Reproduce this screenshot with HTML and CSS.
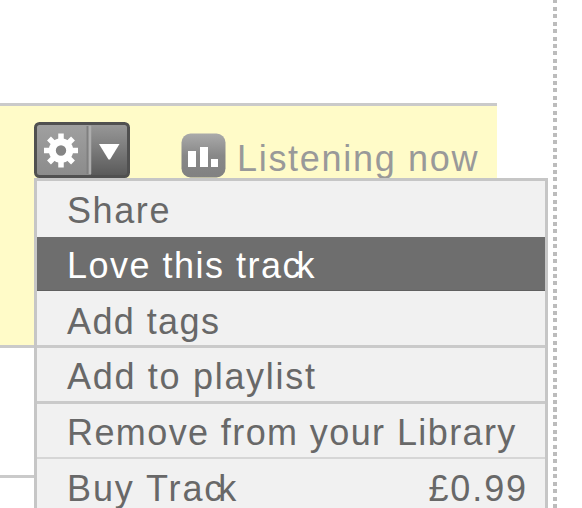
FILE: index.html
```html
<!DOCTYPE html>
<html lang="en">
<head>
<meta charset="utf-8">
<title>Track menu</title>
<link rel="stylesheet" href="styles.css">
</head>
<body>
<main class="page">
  <section class="tracks">
    <div class="track track-current">
      <div class="toolbar">
        <button class="gear-button" aria-label="Track options">
          <svg width="96" height="56" viewBox="0 0 96 56">
            <defs>
              <linearGradient id="gear" x1="0" y1="0" x2="0" y2="1"><stop offset="0" stop-color="#a0a0a0"/><stop offset="1" stop-color="#8b8b8b"/></linearGradient>
              <linearGradient id="drop" x1="0" y1="0" x2="0" y2="1"><stop offset="0" stop-color="#989898"/><stop offset=".45" stop-color="#7d7d7d"/><stop offset="1" stop-color="#595959"/></linearGradient>
            </defs>
            <rect x="1.5" y="1.5" width="93" height="53" rx="4" fill="url(#gear)"/>
            <path d="M57 2h34q3 0 3 3v46q0 3-3 3H57z" fill="url(#drop)"/>
            <path d="M53.500 4v48" stroke="#808080" stroke-width="2"/>
            <path d="M56 4v48" stroke="#adadad" stroke-width="2.500"/>
            <rect x="1.500" y="1.500" width="93" height="53" rx="4" fill="none" stroke="#505050" stroke-width="3"/>
            <g transform="translate(27 28.500)" stroke="#fff">
              <path d="M0-17V17M-17 0H17M-12-12L12 12M-12 12L12-12" stroke-width="5.500"/>
              <circle r="8.700" fill="#858585" stroke-width="7"/>
            </g>
            <path d="M65 22H85.500L76 37.500h-1.500z" fill="#fff"/>
          </svg>
        </button>
        <div class="listening">
          <svg width="45" height="45" viewBox="0 0 45 45">
            <defs><linearGradient id="bars" x1="0" y1="0" x2="0" y2="1"><stop offset="0" stop-color="#aaa"/><stop offset=".5" stop-color="#888"/><stop offset="1" stop-color="#818181"/></linearGradient></defs>
            <rect x=".5" y=".5" width="44" height="44" rx="9" fill="url(#bars)"/>
            <path d="M7 18h8v16H7zM19 14h8v20h-8zM30 26h7v8h-7z" fill="#fff"/>
          </svg>
          <span class="listening-text">Listening now</span>
        </div>
      </div>
    </div>
    <div class="track"></div>
  </section>
  <ul class="menu">
    <li class="item share"><span>Share</span></li>
    <li class="item selected"><span>Love this tra<span class="tight">c</span>k</span></li>
    <li class="item tags"><span>Add tags</span></li>
    <li class="item playlist"><span>Add to playlist</span></li>
    <li class="item library"><span>Remove from your Library</span></li>
    <li class="item buy"><span>Buy Tra<span class="tight">c</span>k</span><span class="price">£0.99</span></li>
  </ul>
  <div class="divider"></div>
</main>
</body>
</html>
```
FILE: styles.css
```css
* { box-sizing: border-box; }
body {
  margin: 0;
  background: #fff;
  font-family: "Liberation Sans", Arial, sans-serif;
  font-size: 36px;
  color: #686868;
}
.page {
  position: relative;
  width: 582px;
  height: 508px;
  padding-top: 103px;
  overflow: hidden;
}
.tracks { width: 497px; }
.track {
  height: 130px;
  border-bottom: 3px solid #cacaca;
}
.track-current {
  height: 245px;
  padding: 17px 0 0 34px;
  background: #fffbc8;
  border-top: 3px solid #cacaca;
}
.toolbar { display: flex; }
.gear-button {
  display: block;
  height: 56px;
  margin-top: -1px;
  padding: 0;
  border: 0;
  background: none;
}
.gear-button svg, .listening svg { display: block; }
.listening {
  display: flex;
  margin: 10px 0 0 51px;
  color: #999;
}
.listening-text {
  margin: 5px 0 0 11px;
  line-height: 41px;
  letter-spacing: 1.7px;
  white-space: nowrap;
}
.menu {
  position: absolute;
  top: 178px;
  left: 34px;
  width: 514px;
  margin: 0;
  padding: 0;
  list-style: none;
  background: #f1f1f1;
  border: 3px solid #c6c6c6;
}
.item {
  display: flex;
  justify-content: space-between;
  height: 56px;
  padding: 0 17px 0 30px;
  border-bottom: 2px solid #cacaca;
  line-height: 58px;
  white-space: nowrap;
}
.share { letter-spacing: 1.6px; line-height: 60px; border-bottom: 0; }
.selected {
  height: 54px;
  border-bottom: 1px solid #606060;
  background: #6e6e6e;
  color: #fff;
  letter-spacing: 1.5px;
}
.tight { letter-spacing: -4px; }
.tags { height: 57px; line-height: 61px; letter-spacing: 1.4px; border-bottom-width: 3px; }
.playlist { letter-spacing: 1.7px; border-bottom-width: 3px; }
.library { height: 55px; letter-spacing: 1.4px; border-color: #d6d6d6; }
.buy { border: 0; line-height: 60px; letter-spacing: 1.9px; }
.price { letter-spacing: 1.9px; }
.divider {
  position: absolute;
  top: -3.8px;
  left: 553px;
  width: 4px;
  height: 512px;
  background: repeating-linear-gradient(#fff 0 3.4px, #bcbcbc 3.4px 7.42px);
}
```
